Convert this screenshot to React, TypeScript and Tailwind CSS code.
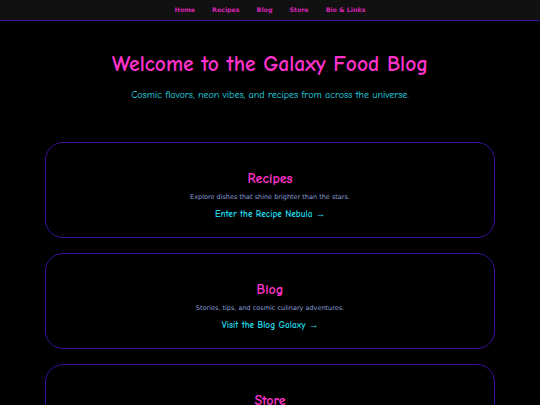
const links = ["Home", "Recipes", "Blog", "Store", "Bio & Links"];

const sections = [
  {
    title: "Recipes",
    text: "Explore dishes that shine brighter than the stars.",
    cta: "Enter the Recipe Nebula →",
  },
  {
    title: "Blog",
    text: "Stories, tips, and cosmic culinary adventures.",
    cta: "Visit the Blog Galaxy →",
  },
  {
    title: "Store",
    text: "Galactic goodies and merch for space foodies.",
    cta: "Shop the Star Market →",
  },
];

const comic = "font-['Comic_Sans_MS','Comic_Neue',cursive]";

export default function App() {
  return (
    <div className="min-h-screen bg-black font-['Trebuchet_MS','DejaVu_Sans',sans-serif]">
      <nav className="flex h-[21px] items-center justify-center gap-[17px] border-b border-[#3a129a] bg-[#111111]">
        {links.map((l) => (
          <a key={l} className="text-[6.3px] font-bold text-[#d824b4]">
            {l}
          </a>
        ))}
      </nav>

      <header className="pt-[27px] text-center">
        <h1 className={`${comic} text-[21.5px] font-bold text-[#ff33cc]`}>
          Welcome to the Galaxy Food Blog
        </h1>
        <p className={`${comic} mt-[8px] text-[10px] text-[#26dde6]`}>
          Cosmic flavors, neon vibes, and recipes from across the universe.
        </p>
      </header>

      <main className="mx-[45px] mt-[39px] flex flex-col gap-[15px]">
        {sections.map((s) => (
          <section
            key={s.title}
            className="flex h-[96px] flex-col items-center justify-center rounded-[18px] border border-[#3a129a] pt-[9px] text-center"
          >
            <h2 className={`${comic} text-[14px] font-bold text-[#ff33cc]`}>{s.title}</h2>
            <p className="mt-[4px] text-[6.5px] text-[#8a9ed8]">{s.text}</p>
            <a className={`${comic} mt-[5px] text-[9.3px] font-bold text-[#22d8e6]`}>{s.cta}</a>
          </section>
        ))}
      </main>
    </div>
  );
}
